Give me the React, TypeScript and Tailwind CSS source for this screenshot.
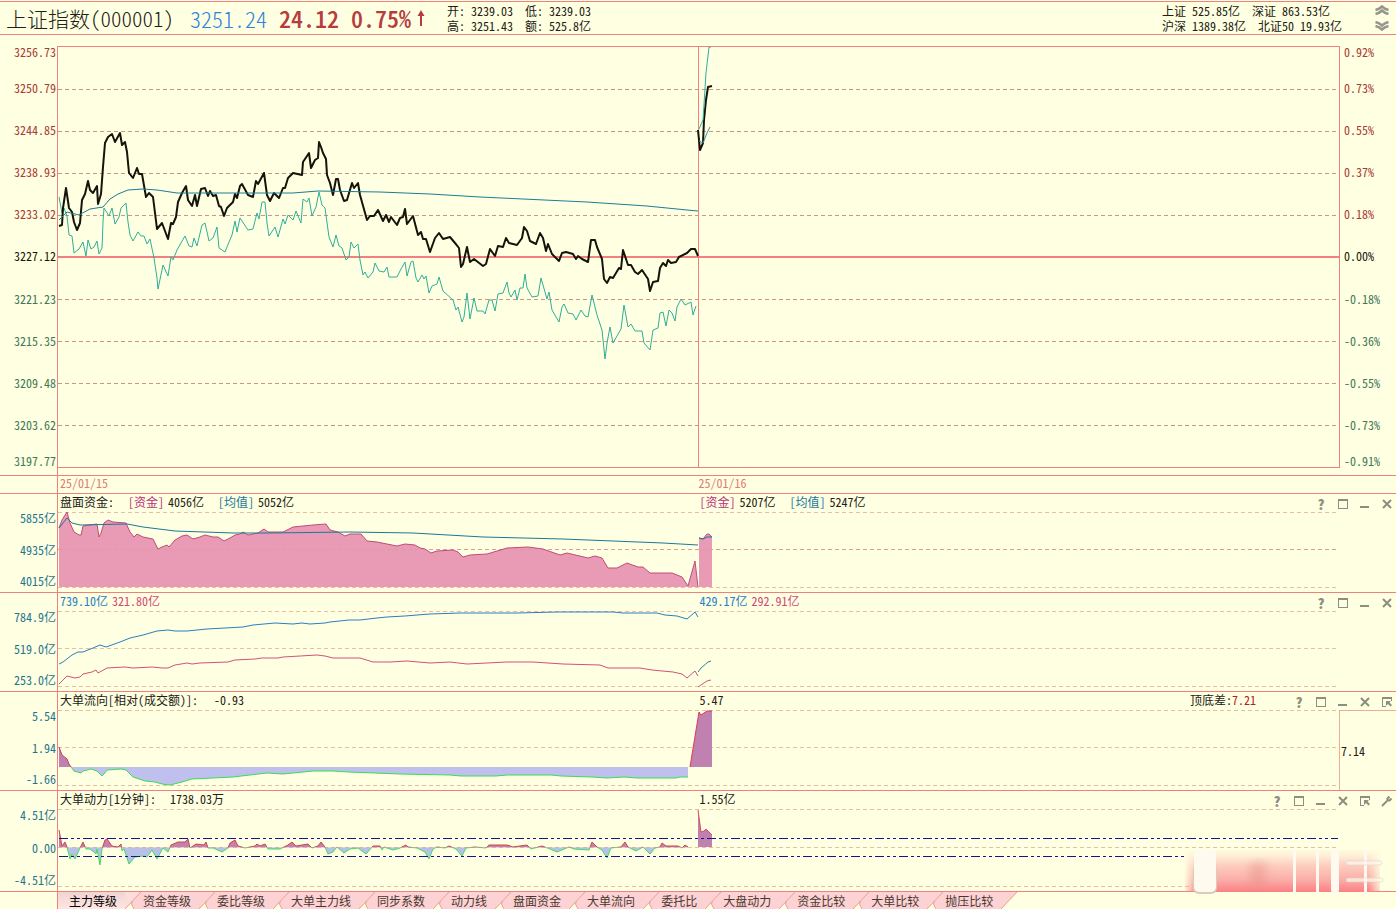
import React, { useState } from "react";

const PRICE =
  "59,226 62,225 63,208 66,188 69,208 72,212 74,222 77,230 80,223 82,200 85,194 88,181 90,190 93,193 97,186 98,204 101,194 103,167 105,143 108,137 112,134 115,142 120,133 122,145 125,142 127,152 129,173 133,178 137,168 139,174 142,174 146,197 149,193 153,197 157,229 162,223 168,239 171,223 173,224 176,217 178,202 182,193 186,186 188,200 192,206 195,195 197,206 201,189 205,188 208,196 210,191 213,196 216,195 219,206 221,207 224,216 227,208 233,202 235,194 237,198 240,186 242,184 248,195 253,197 256,181 258,184 264,173 267,195 270,201 274,193 279,198 283,188 285,188 288,178 293,173 302,175 303,162 309,153 311,168 315,160 318,158 319,142 321,147 323,153 326,159 327,175 330,183 333,195 336,179 338,179 340,190 344,201 347,200 352,183 354,188 358,183 360,195 367,220 370,216 374,216 378,210 383,221 386,215 389,222 391,217 397,225 400,218 403,217 405,209 407,224 413,216 418,235 421,232 423,239 426,239 430,252 435,238 439,233 443,239 450,237 455,243 459,248 461,267 463,264 467,247 470,262 474,259 483,266 486,264 490,249 495,256 498,246 503,247 506,238 509,243 517,245 522,238 524,227 527,231 530,241 536,244 540,233 543,238 546,251 548,244 552,254 559,261 562,253 566,252 573,254 576,259 578,256 582,259 588,262 591,240 595,240 597,247 602,259 604,279 607,283 610,277 613,278 619,268 621,269 623,250 628,265 631,265 635,272 638,274 642,270 648,279 650,291 653,282 658,281 660,268 663,263 666,266 668,260 671,263 676,262 679,257 687,253 691,249 695,249 698,256";
const PRICE_TODAY = "698,130 700,150 703,143 704,120 706,100 708,87 712,86";

const LEAD =
  "59,197 62,213 64,208 67,216 69,235 72,236 74,253 79,249 83,242 86,256 88,240 91,249 94,247 97,241 99,254 102,248 103,222 104,208 109,216 112,208 115,224 119,217 121,208 126,203 128,222 130,235 133,241 138,232 141,236 144,236 147,244 150,239 154,258 157,278 158,289 163,265 168,276 171,257 173,260 177,250 185,236 189,246 192,247 194,238 197,246 202,225 205,223 209,241 213,238 217,227 219,248 225,252 229,242 232,235 235,221 237,232 240,218 248,230 253,229 257,213 259,219 262,202 265,202 267,223 269,236 275,227 278,237 283,219 285,224 288,215 293,220 296,211 301,223 303,199 307,202 309,198 312,216 316,207 319,192 322,205 325,208 329,237 333,247 336,235 339,246 342,248 346,260 349,257 351,242 354,248 358,244 360,260 363,275 365,272 368,278 373,272 375,263 379,271 384,272 387,267 389,277 397,277 401,269 405,262 407,276 411,262 413,261 416,278 418,282 422,275 424,279 426,276 429,293 432,286 437,284 439,277 443,291 453,300 456,310 458,307 462,322 464,317 467,293 470,319 474,298 477,311 483,311 485,314 489,300 492,300 495,311 498,294 503,293 507,282 509,293 511,297 515,290 517,300 520,288 523,288 525,274 527,288 532,297 538,296 541,278 547,299 549,292 552,310 559,322 562,307 564,304 568,313 573,314 576,320 581,310 585,316 588,317 592,295 597,315 602,330 605,359 607,343 610,327 613,343 621,329 624,305 628,327 631,324 635,331 642,331 644,343 650,350 653,330 658,328 660,313 663,312 666,326 669,310 672,313 675,321 677,307 681,299 685,305 691,302 693,315 696,306";
const LEAD_TODAY = "699,129 703,120 706,73 709,47 711,47";

const AVERAGE =
  "59,220 67,212 79,215 90,209 103,207 110,199 118,194 128,190 143,189 157,190 177,193 233,193 293,193 318,191 380,192 430,194 480,197 587,202 647,206 687,210 698,211";
const AVERAGE_TODAY = "699,141 703,143 707,133 710,127";

const FUND =
  "59,528 62,520 67,512 70,523 74,532 79,535 81,535 83,526 97,524 99,537 101,533 104,523 108,520 113,522 126,523 130,532 134,537 137,534 143,537 153,539 158,549 162,547 167,545 169,547 175,540 182,536 187,535 193,539 200,537 205,535 213,537 218,537 224,541 230,538 235,535 240,534 243,532 248,535 258,533 264,529 268,532 283,532 293,527 313,525 326,524 330,530 338,532 345,536 350,534 361,534 367,541 377,542 397,546 405,544 415,545 420,548 425,549 431,553 437,551 453,550 458,552 463,557 470,555 487,554 507,548 528,547 543,549 560,555 567,553 588,558 595,556 602,558 608,568 617,568 627,563 638,567 643,567 650,573 672,573 682,577 688,586 695,561 698,587";
const FUND_TODAY = "699,538 703,539 707,534 709,534 712,537";
const FUND_AVG =
  "59,528 67,518 72,523 80,525 127,524 143,527 175,531 233,533 267,533 350,532 413,533 483,537 563,539 663,543 698,545";
const FUND_AVG_TODAY = "699,538 703,539 707,537 712,537";

const BUY =
  "59,664 63,662 72,655 78,652 83,652 93,648 100,645 106,647 120,642 130,638 143,635 157,631 168,630 175,631 187,631 207,629 243,627 253,625 275,623 293,624 302,623 310,624 325,623 330,622 349,620 360,620 377,618 387,617 405,616 417,615 430,614 460,613 517,613 557,612 593,612 613,612 623,613 657,613 665,615 677,616 687,619 695,612 698,617";
const BUY_TODAY = "698,672 701,668 708,662 711,661";
const SELL =
  "59,684 67,676 75,678 80,677 83,674 92,672 96,670 98,673 107,668 125,667 133,668 152,667 162,668 168,668 175,665 187,663 192,664 200,663 228,662 235,660 255,659 262,658 278,658 283,657 300,656 317,655 325,656 333,658 349,658 360,658 373,662 390,662 407,661 430,663 450,662 467,664 507,662 533,662 563,664 600,665 608,668 640,668 652,670 673,672 682,674 687,678 695,671 698,676";
const SELL_TODAY = "698,687 707,681 711,680";

const FLOW_OPEN = "59,747 62,755 67,759 69,764 71,767";
const FLOW =
  "71,767 74,771 81,773 83,771 91,769 97,771 102,776 104,774 107,770 121,769 126,770 133,777 145,781 155,782 162,784 170,785 182,782 192,779 233,777 267,773 283,774 313,771 333,771 349,772 400,774 450,775 461,776 496,776 507,775 551,775 561,776 592,777 607,778 624,777 637,778 676,778 680,777 688,777";
const FLOW_TODAY = "690,767 699,712 701,715 707,711 712,711";

const POWER =
  "59,830 62,846 65,842 67,847 70,859 72,854 75,859 80,848 83,842 86,849 90,849 94,852 96,854 97,849 100,865 102,849 105,840 107,839 112,846 118,847 121,844 122,851 124,849 129,864 135,857 143,856 147,857 152,850 157,859 163,848 168,852 171,845 178,842 185,842 188,839 190,848 196,844 204,845 206,842 208,848 213,848 222,852 228,848 230,843 235,840 238,846 245,848 255,846 257,844 260,846 265,844 268,849 280,849 288,845 292,842 296,846 308,844 312,848 318,846 321,842 325,847 328,854 333,852 337,847 344,853 350,849 358,848 366,854 373,846 380,846 382,850 384,847 393,850 400,848 406,845 408,847 417,848 425,852 429,859 433,849 437,847 445,848 449,846 456,849 462,856 466,848 475,847 486,848 489,845 507,845 513,847 527,845 531,849 542,846 550,849 557,852 569,847 574,849 589,850 592,842 597,847 602,850 607,858 611,848 621,847 625,842 628,847 636,851 643,847 650,854 655,848 660,847 662,843 666,846 678,846 682,848 685,845 688,847";
const POWER_TODAY = "698,810 701,832 704,831 706,829 712,835";

const priceAxis = ["3256.73", "3250.79", "3244.85", "3238.93", "3233.02", "3227.12", "3221.23", "3215.35", "3209.48", "3203.62", "3197.77"];
const percentAxis = ["0.92%", "0.73%", "0.55%", "0.37%", "0.18%", "0.00%", "-0.18%", "-0.36%", "-0.55%", "-0.73%", "-0.91%"];

const tabs = ["主力等级", "资金等级", "委比等级", "大单主力线", "同步系数", "动力线", "盘面资金", "大单流向", "委托比", "大盘动力", "资金比较", "大单比较", "抛压比较"];

type LineProps = { points: string; color: string; width?: number };

const Line = ({ points, color, width = 1 }: LineProps) => (
  <polyline points={points} fill="none" stroke={color} strokeWidth={width} strokeLinejoin="round" vectorEffect="non-scaling-stroke" />
);

// closes a line down (or up) to the base and fills it
const Area = ({ points, base, color }: { points: string; base: number; color: string }) => {
  const list = points.split(" ");
  const first = list[0].split(",")[0];
  const last = list[list.length - 1].split(",")[0];
  return <polygon points={`${first},${base} ${points} ${last},${base}`} fill={color} />;
};

const GridLine = ({ y, color = "#e6bfa2" }: { y: number; color?: string }) => (
  <line x1="58" x2="1339" y1={y + 0.5} y2={y + 0.5} stroke={color} strokeDasharray="4 3" shapeRendering="crispEdges" vectorEffect="non-scaling-stroke" />
);

type PlotProps = { top: number; height: number; className: string; label: string; children: React.ReactNode };

const Plot = ({ top, height, className, label, children }: PlotProps) => (
  <svg role="img" aria-label={label} className={className} viewBox={`58 ${top} 1281 ${height}`} preserveAspectRatio="none">
    {children}
  </svg>
);

const icons = {
  help: <span className="text-[14px] font-black leading-3">?</span>,
  max: (
    <svg width="12" height="12" viewBox="0 0 12 12" fill="none" stroke="currentColor" shapeRendering="crispEdges">
      <path d="M1.5 1.5h9v9h-9zM1.5 2.5h9" />
    </svg>
  ),
  min: (
    <svg width="12" height="12" viewBox="0 0 12 12" fill="currentColor">
      <rect x="1" y="8" width="9" height="2" />
    </svg>
  ),
  close: (
    <svg width="12" height="12" viewBox="0 0 12 12" fill="none" stroke="currentColor" strokeWidth="2">
      <path d="M2 2l8 8M10 2l-8 8" />
    </svg>
  ),
  popout: (
    <svg width="12" height="12" viewBox="0 0 12 12" fill="none" stroke="currentColor">
      <path d="M4.5 10.5h-3v-9h9v3M1.5 2.5h9" shapeRendering="crispEdges" />
      <path d="M5 5h5L8.500 6.500l2.500 2.500-1.500 1.500L7 8l-2 2z" fill="currentColor" stroke="none" />
    </svg>
  ),
  tool: (
    <svg width="12" height="12" viewBox="0 0 12 12" fill="none" stroke="currentColor" strokeWidth="2">
      <path d="M1 11l5-5" />
      <path d="M8.500 1.500L6.500 3.500v2h2l2-2" />
    </svg>
  ),
};

const iconLabels = { help: "帮助", max: "最大化", min: "最小化", close: "关闭", popout: "弹出", tool: "设置" };

type IconName = keyof typeof icons;

const baseButtons: IconName[] = ["help", "max", "min", "close"];

type PanelProps = {
  axis: string[];
  axisHeight?: string;
  left: React.ReactNode;
  right: React.ReactNode;
  extra?: React.ReactNode;
  buttons?: IconName[];
  gutter?: React.ReactNode;
  overlay?: React.ReactNode;
  children: React.ReactNode;
};

const Panel = ({ axis, axisHeight = "h-[75px]", left, right, extra, buttons = baseButtons, gutter, overlay, children }: PanelProps) => (
  <section className="relative flex overflow-x-clip border-b border-[#f08080]">
    <div className="w-[57px] shrink-0 pt-[18px] pr-px text-right text-[#1f7590]">
      <div className={`flex flex-col justify-between ${axisHeight}`}>
        {axis.map((value) => (
          <span key={value}>{value}</span>
        ))}
      </div>
    </div>
    <div className="min-w-0 flex-1 border-l border-[#f08080]">
      <div className="flex h-[18px] items-center pb-0.5">
        <div className="flex w-[calc((100%-57px)/2)] items-center pl-0.5">{left}</div>
        <div className="flex flex-1 items-center pl-px">
          {right}
          <div className="-mr-0.5 ml-auto flex items-center">
            {extra}
            {buttons.map((name) => (
              <button key={name} aria-label={iconLabels[name]} className="flex h-4 w-[22px] items-end justify-center text-[#8d8d80]">
                {icons[name]}
              </button>
            ))}
          </div>
        </div>
      </div>
      <div className="flex">
        {children}
        <div className="w-[57px] shrink-0">{gutter}</div>
      </div>
    </div>
    {overlay}
  </section>
);

const FundLegend = ({ fund, avg }: { fund: string; avg: string }) => (
  <div className="flex gap-3.5">
    <div className="flex gap-1">
      <span className="text-[#b8307c]">[资金]</span>
      <span>{fund}</span>
    </div>
    <div className="flex gap-1">
      <span className="text-[#1878a0]">[均值]</span>
      <span>{avg}</span>
    </div>
  </div>
);

const Quote = ({ name, value }: { name: string; value: string }) => (
  <div className="flex gap-1.5">
    <span>{name}</span>
    <span>{value}</span>
  </div>
);

// soft pink strip over the lower right corner
const Haze = () => (
  <svg className="pointer-events-none absolute right-0 -bottom-1 h-12 w-[214px]" viewBox="1182 847 214 48" aria-hidden="true">
    <defs>
      <linearGradient id="haze" x1="0" y1="0" x2="0" y2="1">
        <stop offset="0" stopColor="#ffe8d4" stopOpacity="0.2" />
        <stop offset="0.35" stopColor="#fdcfc0" />
        <stop offset="0.7" stopColor="#fbafa8" />
        <stop offset="1" stopColor="#fb7f85" />
      </linearGradient>
      <linearGradient id="hazeEdge">
        <stop offset="0" stopColor="#fff" stopOpacity="0" />
        <stop offset="0.06" stopColor="#fff" />
        <stop offset="0.94" stopColor="#fff" />
        <stop offset="1" stopColor="#fff" stopOpacity="0.2" />
      </linearGradient>
      <mask id="hazeMask">
        <rect x="1184" y="848" width="196" height="44" fill="url(#hazeEdge)" />
      </mask>
      <filter id="soft" x="-10%" y="-20%" width="120%" height="140%">
        <feGaussianBlur stdDeviation="0.7" />
      </filter>
      <filter id="softer" x="-50%" y="-20%" width="200%" height="140%">
        <feGaussianBlur stdDeviation="5" />
      </filter>
    </defs>
    <rect x="1184" y="850" width="196" height="42" fill="url(#haze)" mask="url(#hazeMask)" />
    <rect x="1250" y="862" width="16" height="24" fill="#e08c80" opacity="0.4" filter="url(#softer)" />
    <g filter="url(#soft)">
      <rect x="1193" y="864" width="24" height="30" rx="6" fill="#dccabc" />
      <rect x="1194" y="849" width="22" height="43" rx="5" fill="#fffaf0" />
      <rect x="1293" y="849" width="3" height="43" fill="#fffaf0" />
      <rect x="1316" y="849" width="3" height="43" fill="#fffaf0" />
      <rect x="1331" y="849" width="8" height="44" rx="3" fill="#fffaf0" />
      <rect x="1364" y="849" width="3" height="44" fill="#fffaf0" />
      <rect x="1346" y="861" width="36" height="4" rx="2" fill="#fff8f0" fillOpacity="0.7" stroke="#d8cfc0" strokeOpacity="0.5" />
      <rect x="1346" y="878" width="37" height="4" rx="2" fill="#fff8f0" fillOpacity="0.7" stroke="#d8cfc0" strokeOpacity="0.5" />
    </g>
  </svg>
);

const axisColor = (index: number) => {
  if (index < 5) return "text-[#a83a38]";
  if (index === 5) return "text-[#18180c]";
  return "text-[#41785a]";
};

const PriceLabels = ({ values, className }: { values: string[]; className: string }) => (
  <div className={`flex flex-col ${className}`}>
    {values.map((value, i) => {
      if (i === 0) return <span key={value} className={`flex-1 ${axisColor(i)}`}>{value}</span>;
      if (i === values.length - 1) return <span key={value} className={`flex flex-1 items-end ${axisColor(i)}`}>{value}</span>;
      return <span key={value} className={`flex flex-2 items-center ${axisColor(i)}`}>{value}</span>;
    })}
  </div>
);

const App = () => {
  const [active, setActive] = useState("主力等级");

  return (
    <div className="min-h-screen bg-[#ffffe1] pt-px font-['Noto_Sans_CJK_SC',sans-serif] text-[12px] leading-3 text-[#202014] [font-feature-settings:'hwid']">
      {/* Quote header */}
      <header className="flex h-[34px] items-center border-y border-[#f08080] pl-1.5 whitespace-nowrap">
        <h1 className="text-[21px] leading-8 font-light text-[#202018]">上证指数(000001)</h1>
        <span className="ml-4 text-[22px] leading-8 font-light text-[#2c84dc]">3251.24</span>
        <div className="ml-3 flex items-center gap-3 text-[24px] leading-8 font-medium text-[#b63c40]">
          <span>24.12</span>
          <span>0.75%</span>
        </div>
        <svg className="ml-1" width="12" height="18" viewBox="0 0 12 18" fill="none" stroke="#b63c40" strokeWidth="2" aria-label="上涨">
          <path d="M6 17V3" />
          <path d="M2.500 7L6 1l3.500 6z" fill="#b63c40" stroke="none" />
        </svg>
        <div className="ml-5 grid grid-cols-[auto_auto] gap-x-3 leading-[15px]">
          <Quote name="开:" value="3239.03" />
          <Quote name="低:" value="3239.03" />
          <Quote name="高:" value="3251.43" />
          <Quote name="额:" value="525.8亿" />
        </div>
        <div className="ml-auto leading-[15px]">
          <div className="flex gap-3">
            <Quote name="上证" value="525.85亿" />
            <Quote name="深证" value="863.53亿" />
          </div>
          <div className="flex gap-3">
            <Quote name="沪深" value="1389.38亿" />
            <Quote name="北证50" value="19.93亿" />
          </div>
        </div>
        <div className="mr-1.5 ml-8 flex flex-col gap-1.5">
          <button aria-label="上一个">
            <svg width="16" height="10" viewBox="0 0 16 10" fill="none" stroke="#96968e" strokeWidth="2.500">
              <path d="M1.500 5Q5.500 4 8 1.500Q10.500 4 14.500 5M1.500 9Q5.500 8 8 5.500Q10.500 8 14.500 9" />
            </svg>
          </button>
          <button aria-label="下一个">
            <svg width="16" height="10" viewBox="0 0 16 10" fill="none" stroke="#96968e" strokeWidth="2.500">
              <path d="M1.500 1Q5.500 2 8 4.500Q10.500 2 14.500 1M1.500 5Q5.500 6 8 8.500Q10.500 6 14.500 5" />
            </svg>
          </button>
        </div>
      </header>

      {/* Price chart */}
      <section className="flex border-b border-[#f08080] pt-[11px]">
        <PriceLabels values={priceAxis} className="w-[57px] shrink-0 items-end pr-px pb-2" />
        <div className="min-w-0 flex-1 border-l border-[#f08080] pb-[7px]">
          <div className="border-y border-r border-[#f08080]">
            <Plot top={47} height={420} className="block h-[420px] w-full" label="上证指数分时走势">
              {[89, 131, 173, 215, 299, 341, 383, 425].map((y) => (
                <GridLine key={y} y={y} color="#cf9484" />
              ))}
              <line x1="58" x2="1339" y1="257" y2="257" stroke="#f28080" strokeWidth="2" vectorEffect="non-scaling-stroke" />
              <line x1="698.5" x2="698.5" y1="47" y2="467" stroke="#f08080" vectorEffect="non-scaling-stroke" />
              <Line points={LEAD} color="#2fae9c" />
              <Line points={PRICE} color="#14140a" width={2} />
              <Line points={AVERAGE} color="#1c7c98" />
              <Line points={PRICE_TODAY} color="#14140a" width={2} />
              <Line points={LEAD_TODAY} color="#2fae9c" />
              <Line points={AVERAGE_TODAY} color="#3c8ca8" />
            </Plot>
          </div>
        </div>
        <PriceLabels values={percentAxis} className="w-14 shrink-0 pb-2 pl-1" />
      </section>

      {/* Dates */}
      <div className="flex border-b border-[#f08080] pl-[57px] text-[#e07c78]">
        <div className="flex h-[17px] flex-1 items-center border-l border-[#f08080] pb-1">
          <time dateTime="2025-01-15" className="w-[calc((100%-57px)/2)] pl-0.5">25/01/15</time>
          <time dateTime="2025-01-16">25/01/16</time>
        </div>
      </div>

      <Panel
        axis={["5855亿", "4935亿", "4015亿"]}
        left={
          <div className="flex gap-3.5">
            <h2>盘面资金:</h2>
            <FundLegend fund="4056亿" avg="5052亿" />
          </div>
        }
        right={<FundLegend fund="5207亿" avg="5247亿" />}
      >
        <Plot top={512} height={80} className="block h-20 min-w-0 flex-1" label="盘面资金">
          <Area points={FUND} base={587} color="#e99ab4" />
          <Area points={FUND_TODAY} base={587} color="#e99ab4" />
          <GridLine y={512} />
          <GridLine y={549} color="#dd9c9c" />
          <GridLine y={587} />
          <Line points={FUND} color="#bf4c7c" />
          <Line points={FUND_TODAY} color="#bf4c7c" />
          <Line points={FUND_AVG} color="#1c7898" />
          <Line points={FUND_AVG_TODAY} color="#1c7898" />
        </Plot>
      </Panel>

      <Panel
        axis={["784.9亿", "519.0亿", "253.0亿"]}
        left={
          <div className="flex gap-1">
            <span className="text-[#2480c4]">739.10亿</span>
            <span className="text-[#d0487c]">321.80亿</span>
          </div>
        }
        right={
          <div className="flex gap-1">
            <span className="text-[#2480c4]">429.17亿</span>
            <span className="text-[#d0487c]">292.91亿</span>
          </div>
        }
      >
        <Plot top={611} height={80} className="block h-20 min-w-0 flex-1" label="买卖资金">
          <GridLine y={611} />
          <GridLine y={648} />
          <GridLine y={686} />
          <Line points={BUY} color="#2880c0" />
          <Line points={BUY_TODAY} color="#2c84a8" />
          <Line points={SELL} color="#d4507c" />
          <Line points={SELL_TODAY} color="#d4507c" />
        </Plot>
      </Panel>

      <Panel
        axis={["5.54", "1.94", "-1.66"]}
        left={
          <div className="flex gap-4">
            <h2>大单流向[相对(成交额)]:</h2>
            <span>-0.93</span>
          </div>
        }
        right={<span>5.47</span>}
        extra={
          <div className="mr-8 flex">
            <span>顶底差:</span>
            <span className="text-[#b02028]">7.21</span>
          </div>
        }
        buttons={[...baseButtons, "popout"]}
        gutter={<div className="flex h-full items-center border-t border-l border-[#eeaa9c] pl-px">7.14</div>}
      >
        <Plot top={710} height={80} className="block h-20 min-w-0 flex-1" label="大单流向">
          <GridLine y={710} />
          <GridLine y={747} />
          <GridLine y={785} />
          <Area points={FLOW_OPEN} base={767} color="#c080b0" />
          <Area points={FLOW} base={767} color="#c0c0ee" />
          <Area points={FLOW_TODAY} base={767} color="#c080b0" />
          <Line points={FLOW_OPEN} color="#d0404c" />
          <Line points={FLOW} color="#38dc58" />
          <Line points={FLOW_TODAY} color="#d83c54" />
        </Plot>
      </Panel>

      <Panel
        axis={["4.51亿", "0.00", "-4.51亿"]}
        axisHeight="h-[77px]"
        left={
          <div className="flex gap-3.5">
            <h2>大单动力[1分钟]:</h2>
            <span>1738.03万</span>
          </div>
        }
        right={<span>1.55亿</span>}
        buttons={[...baseButtons, "popout", "tool"]}
        overlay={<Haze />}
      >
        <Plot top={809} height={82} className="block h-[82px] min-w-0 flex-1" label="大单动力">
          <defs>
            <clipPath id="above">
              <rect x="58" y="809" width="1281" height="38.500" />
            </clipPath>
            <clipPath id="below">
              <rect x="58" y="847.500" width="1281" height="44" />
            </clipPath>
          </defs>
          <GridLine y={809} />
          <GridLine y={847} />
          <GridLine y={886} />
          <g clipPath="url(#above)">
            <Area points={POWER} base={847.5} color="#c880a8" />
            <Line points={POWER} color="#cc4450" />
          </g>
          <g clipPath="url(#below)">
            <Area points={POWER} base={847.5} color="#b8c0e8" />
            <Line points={POWER} color="#40dc60" />
          </g>
          <Area points={POWER_TODAY} base={847} color="#c080b0" />
          <Line points={POWER_TODAY} color="#d84c5c" />
          <line x1="59" x2="1338" y1="838.500" y2="838.500" stroke="#14148c" strokeDasharray="9 3 3 3 3 3" shapeRendering="crispEdges" vectorEffect="non-scaling-stroke" />
          <line x1="59" x2="1184" y1="856.500" y2="856.500" stroke="#14148c" strokeDasharray="9 3 3 3 3 3" shapeRendering="crispEdges" vectorEffect="non-scaling-stroke" />
        </Plot>
      </Panel>

      {/* Indicator tabs */}
      <nav className="ml-[57px] flex h-[17px] border-l border-[#f08080]">
        {tabs.map((tab, i) => (
          <div key={tab} className="flex shrink-0">
            <button
              onClick={() => setActive(tab)}
              className={`pr-2 ${i === 0 ? "pl-[11px]" : "pl-0.5"} ${active === tab ? "bg-linear-to-b from-[#f0d4d4] to-[#ffe6e2] text-black" : "bg-[#fdd2d4] text-[#483830]"}`}
            >
              {tab}
            </button>
            <svg width="16" height="17" viewBox="0 0 16 17" fill="none" aria-hidden="true">
              <path d="M0 0H16L0 17z" fill={active === tab ? "#fbdedc" : "#fdd2d4"} />
              {i < tabs.length - 1 && (
                <>
                  <path d="M16 0V17H9L6 12L7 9z" fill="#fdd2d4" />
                  <path d="M7.500 9L6.500 12L9 17" stroke="#e8a090" />
                </>
              )}
              <path d="M16 0L0 17" stroke="#e8a090" />
            </svg>
          </div>
        ))}
      </nav>
    </div>
  );
};

export default App;
